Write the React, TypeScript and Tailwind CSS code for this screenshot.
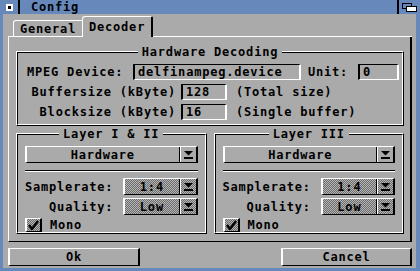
const raised =
  "border-t border-l-2 border-b border-r-2 border-t-white border-l-white border-b-black border-r-black";
const sunken =
  "border-t border-l-2 border-b border-r-2 border-t-black border-l-black border-b-white border-r-white";
const dither =
  "bg-[image:repeating-conic-gradient(#6b6b6b_0_25%,#b6b6b6_0_50%)] bg-[length:2px_2px]";

function DownArrow() {
  return (
    <svg width="9" height="8" viewBox="0 0 9 8" aria-hidden="true">
      <path d="M0 0h9L4.5 4.5z" fill="#000" />
      <rect y="6" width="9" height="2" fill="#000" />
    </svg>
  );
}

function Group({
  title,
  className = "",
  children,
}: {
  title: string;
  className?: string;
  children: React.ReactNode;
}) {
  return (
    <div
      className={`relative border border-t-white border-l-white border-b-black border-r-black ${className}`}
    >
      <div className="h-full border border-t-black border-l-black border-b-white border-r-white">
        {children}
      </div>
      <div className="absolute left-0 right-0 top-[-6px] flex justify-center">
        <span className="bg-[#aaaaaa] px-[4px] leading-[12px]">{title}</span>
      </div>
    </div>
  );
}

function Field({ value, className = "" }: { value: string; className?: string }) {
  return (
    <div className={`flex h-[16px] items-center pl-[3px] ${sunken} ${className}`}>
      {value}
    </div>
  );
}

function Popup({ value, disabled = false }: { value: string; disabled?: boolean }) {
  return (
    <div className={`flex h-[17px] ${raised} ${disabled ? dither : ""}`}>
      <div className="flex flex-1 items-center justify-center">{value}</div>
      <div className="border-l border-l-black">
        <div className="flex h-full w-[16px] items-center justify-center border-l border-l-white">
          <DownArrow />
        </div>
      </div>
    </div>
  );
}

function LayerGroup({ title }: { title: string }) {
  return (
    <Group title={title} className="flex-1">
      <div className="flex flex-col px-[7px] pt-[11px]">
        <Popup value="Hardware" />
        <div className="mt-[7px] h-[2px] border-t border-b border-t-black border-b-white" />
        <div className="mt-[6px] grid grid-cols-[auto_1fr] items-center gap-x-[10px] gap-y-[3px]">
          <div className="text-right">Samplerate:</div>
          <Popup value="1:4" disabled />
          <div className="text-right">Quality:</div>
          <Popup value="Low" disabled />
        </div>
        <div className="mt-[3px] flex h-[14px] items-center gap-[8px]">
          <div className={`flex h-[14px] w-[17px] items-center justify-center ${raised} ${dither}`}>
            <svg width="11" height="10" viewBox="0 0 11 10" aria-hidden="true">
              <path d="M1 5l3 4L10 1" stroke="#000" strokeWidth="2.4" fill="none" />
            </svg>
          </div>
          <span>Mono</span>
        </div>
      </div>
    </Group>
  );
}

export default function App() {
  return (
    <div className="flex h-[271px] w-[420px] flex-col overflow-hidden bg-[#aaaaaa] font-['DejaVu_Sans_Mono',monospace] text-[12px] font-bold leading-[12px] tracking-[0.8px] text-black">
      {/* title bar */}
      <div className="flex h-[14px] bg-[#6688bb]">
        <div className="flex w-[20px] items-center justify-center border-r-2 border-r-black">
          <div className="h-[7px] w-[7px] border-2 border-white bg-black" />
        </div>
        <div className="flex flex-1 items-center pl-[11px]">Config</div>
        <div className="flex w-[23px] items-center justify-center border-l-2 border-l-black">
          <svg width="15" height="9" viewBox="0 0 15 9" aria-hidden="true">
            <rect x="0.5" y="0.5" width="9" height="5" fill="#6688bb" stroke="#000" />
            <rect x="4.5" y="3.5" width="10" height="5" fill="#fff" stroke="#000" />
          </svg>
        </div>
      </div>

      <div className="flex flex-1 flex-col border-l-[3px] border-r-4 border-b-[3px] border-l-[#6688bb] border-r-[#6688bb] border-b-[#6688bb] pl-[5px] pr-[4px]">
        {/* tabs */}
        <div className="flex h-[23px] items-end">
          <div className="h-[1px] w-[5px] bg-white" />
          <div className="flex h-[17px] w-[69px] items-center rounded-tl-[3px] border-t border-l border-b border-t-white border-l-white border-b-white pl-[6px]">
            General
          </div>
          <div className="flex h-[21px] w-[71px] items-center rounded-tl-[3px] rounded-tr-[2px] border-t border-l border-r-2 border-t-white border-l-white border-r-black pb-[1px] pl-[6px]">
            Decoder
          </div>
          <div className="h-[1px] flex-1 bg-white" />
        </div>

        {/* panel */}
        <div className="flex h-[205px] flex-col gap-[7px] border-l border-r-2 border-b border-l-white border-r-black border-b-black pt-[14px] pl-[7px] pr-[6px] pb-[7px]">
          <Group title="Hardware Decoding" className="h-[75px]">
            <div className="flex flex-col gap-[4px] pt-[11px]">
              <div className="flex items-center pl-[9px]">
                <span className="w-[106px]">MPEG Device:</span>
                <Field value="delfinampeg.device" className="w-[168px]" />
                <span className="ml-[7px] w-[50px]">Unit:</span>
                <Field value="0" className="w-[41px]" />
              </div>
              <div className="flex items-center">
                <span className="w-[158px] text-right">Buffersize (kByte)</span>
                <Field value="128" className="ml-[5px] w-[46px]" />
                <span className="ml-[9px]">(Total size)</span>
              </div>
              <div className="flex items-center">
                <span className="w-[158px] text-right">Blocksize (kByte)</span>
                <Field value="16" className="ml-[5px] w-[46px]" />
                <span className="ml-[9px]">(Single buffer)</span>
              </div>
            </div>
          </Group>

          <div className="flex h-[101px] gap-[7px]">
            <LayerGroup title="Layer I & II" />
            <LayerGroup title="Layer III" />
          </div>
        </div>

        {/* buttons */}
        <div className="mt-[6px] flex justify-between">
          <div className={`flex h-[18px] w-[132px] items-center justify-center ${raised}`}>Ok</div>
          <div className={`flex h-[18px] w-[131px] items-center justify-center ${raised}`}>Cancel</div>
        </div>
      </div>
    </div>
  );
}
